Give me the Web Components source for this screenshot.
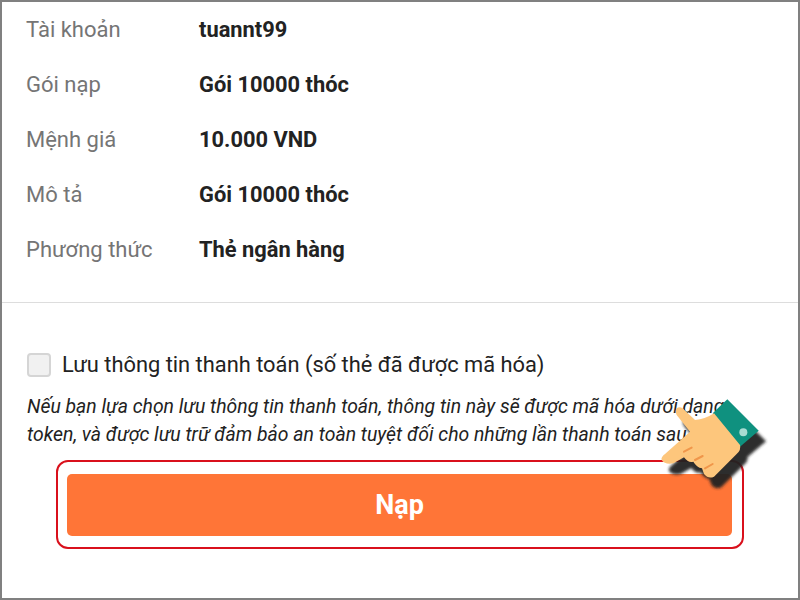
<!DOCTYPE html>
<html>
<head>
<meta charset="utf-8">
<style>
html, body { margin: 0; height: 100%; }
body { font-family: Roboto, "Liberation Sans", sans-serif; background: #fff; }
</style>
</head>
<body>
<payment-screen>
  <info-row label="Tài khoản">tuannt99</info-row>
  <info-row label="Gói nạp">Gói 10000 thóc</info-row>
  <info-row label="Mệnh giá">10.000 VND</info-row>
  <info-row label="Mô tả">Gói 10000 thóc</info-row>
  <info-row label="Phương thức">Thẻ ngân hàng</info-row>
  <save-option slot="footer">Lưu thông tin thanh toán (số thẻ đã được mã hóa)
    <span slot="note">Nếu bạn lựa chọn lưu thông tin thanh toán, thông tin này sẽ được mã hóa dưới dạng token, và được lưu trữ đảm bảo an toàn tuyệt đối cho những lần thanh toán sau.</span>
  </save-option>
  <submit-button slot="footer">Nạp</submit-button>
</payment-screen>

<script>
class PaymentScreen extends HTMLElement {
  constructor() {
    super();
    var root = this.attachShadow({ mode: "open" });
    root.innerHTML = `
<style>
:host { display: block; box-sizing: border-box; width: 800px; height: 600px; border: 2px solid #808080; background: #fff; overflow: hidden; }
.rows { height: 300px; border-bottom: 1px solid #ddd; padding: 0 25px 0 25px; }
.footer { padding: 49px 0 0; }
</style>
<div class="rows"><slot></slot></div>
<div class="footer"><slot name="footer"></slot></div>`;
  }
}
customElements.define("payment-screen", PaymentScreen);

class InfoRow extends HTMLElement {
  constructor() {
    super();
    var root = this.attachShadow({ mode: "open" });
    root.innerHTML = `
<style>
:host { display: grid; grid-template-columns: 173px 1fr; align-items: center; height: 55px; font-size: 22px; margin-left: -1px; }
.label { color: #757575; }
.value { color: #222; font-weight: 700; font-size: 21.85px; }
</style>
<span class="label"></span>
<span class="value"><slot></slot></span>`;
    root.querySelector(".label").textContent = this.getAttribute("label");
  }
}
customElements.define("info-row", InfoRow);

class SaveOption extends HTMLElement {
  constructor() {
    super();
    var root = this.attachShadow({ mode: "open" });
    root.innerHTML = `
<style>
:host { display: block; padding: 0 25px; color: #222; }
.check { display: flex; align-items: center; gap: 11px; font-size: 21.85px; height: 26px; }
.text { padding-bottom: 2px; }
.box { width: 24px; height: 24px; box-sizing: border-box; background: #f1f1f1; border: 2px solid #d5d5d5; border-radius: 4px; }
.note { margin-top: 15px; font-size: 19.4px; font-style: italic; line-height: 28px; color: #222; width: 720px; }
</style>
<div class="check"><span class="box"></span><span class="text"><slot></slot></span></div>
<div class="note"><slot name="note"></slot></div>`;
  }
}
customElements.define("save-option", SaveOption);

class SubmitButton extends HTMLElement {
  constructor() {
    super();
    var root = this.attachShadow({ mode: "open" });
    root.innerHTML = `
<style>
:host { display: block; position: relative; box-sizing: border-box; width: 688px; height: 89px; margin: 11px 0 0 54px; border: 2px solid #d9101c; border-radius: 12px; padding: 12px 10px 11px 9px; }
.btn { display: flex; align-items: center; justify-content: center; height: 100%; background: #ff7537; border-radius: 5px; color: #fff; font-size: 27px; font-weight: 700; box-sizing: border-box; }
svg { position: absolute; left: 582px; top: -82px; }
</style>
<div class="btn"><slot></slot></div>
<svg width="160" height="120" viewBox="0 0 480 360" aria-hidden="true">
  <defs><filter id="b" x="-20%" y="-20%" width="140%" height="140%"><feGaussianBlur stdDeviation="4"/></filter></defs>
  <g fill="#222" opacity=".95" filter="url(#b)" transform="translate(22 32)">
    <path d="M262 58 L356 152 L300 200 L218 100 Z"/>
    <path d="M110 85 Q118 78 128 85 L165 120 Q195 118 222 100 L300 195 Q304 210 290 222 L222 290 Q205 298 192 282 L186 265 Q170 262 160 245 Q145 250 132 232 L100 250 Q75 255 65 240 Q62 232 75 222 L150 155 L110 105 Q104 93 110 85 Z"/>
  </g>
  <path d="M262 58 L356 152 L300 200 L218 100 Z" fill="#0f917f"/>
  <circle cx="310" cy="157" r="12" fill="#a9dcd3"/>
  <path d="M110 85 Q118 78 128 85 L165 120 Q195 118 222 100 L300 195 Q304 210 290 222 L222 290 Q205 298 192 282 L186 265 Q170 262 160 245 Q145 250 132 232 L100 250 Q75 255 65 240 Q62 232 75 222 L150 155 L110 105 Q104 93 110 85 Z" fill="#fdc67c"/>
  <path d="M132 215 L155 203 M165 240 L188 228 M195 265 L218 252" stroke="#f0964a" stroke-width="6" stroke-linecap="round"/>
</svg>`;
  }
}
customElements.define("submit-button", SubmitButton);
</script>
</body>
</html>
